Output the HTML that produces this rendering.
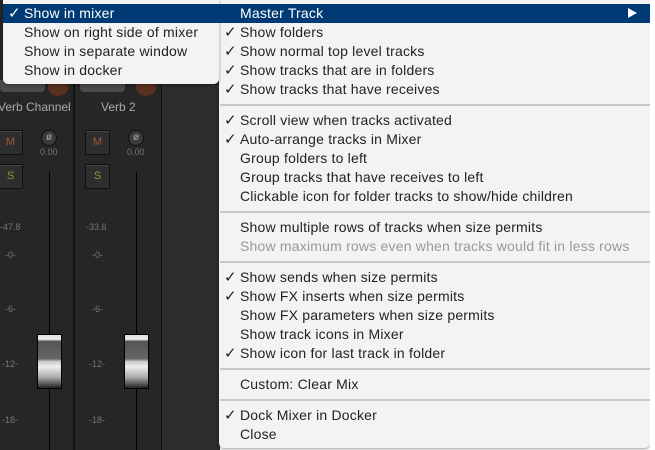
<!DOCTYPE html>
<html><head><style>
*{margin:0;padding:0;box-sizing:border-box}
body{width:655px;height:450px;overflow:hidden;position:relative;background:#fff;font-family:"Liberation Sans",sans-serif}
.mix{position:absolute;left:0;top:0;width:220px;height:450px;background:#262626}
.ab{position:absolute}
.t{position:absolute;font-size:14px;color:#222;white-space:nowrap;line-height:19px;letter-spacing:0.2px}
.ck{position:absolute;font-size:15px;color:#222;line-height:19px;font-family:"DejaVu Sans",sans-serif}
.sep{position:absolute;left:220px;width:430px;height:2px;background:#c8c8c8}
.lbl{position:absolute;font-size:9px;color:#777;font-family:"Liberation Sans",sans-serif}
.btn{position:absolute;width:25px;height:25px;background:#2e2e2e;border:1px solid #111;box-shadow:0 1px 0 #444 inset;font-size:11px;text-align:center;line-height:23px}
.fad{position:absolute;width:25px;height:55px;border:1px solid #000;background:linear-gradient(#ddd 0,#eee 8%,#555 12%,#666 45%,#ccc 50%,#eee 60%,#aaa 80%,#222 100%)}
</style></head><body>
<div class="mix">
  <div class="ab" style="left:73px;top:0;width:2px;height:450px;background:#111"></div>
  <div class="ab" style="left:161px;top:0;width:1px;height:450px;background:#111"></div>
  <div class="ab" style="left:162px;top:0;width:58px;height:450px;background:#2c2c2c"></div>
  <div class="ab" style="left:49px;top:172px;width:1px;height:278px;background:#000"></div>
  <div class="ab" style="left:136px;top:172px;width:1px;height:278px;background:#000"></div>
  <div class="ab" style="left:0;top:80px;width:45px;height:12px;border-radius:0 0 4px 4px;background:#4a4a4a"></div>
  <div class="ab" style="left:80px;top:80px;width:45px;height:12px;border-radius:0 0 4px 4px;background:#4a4a4a"></div>
  <div class="ab" style="left:48px;top:80px;width:20px;height:16px;border-radius:50%;background:#5a3020"></div>
  <div class="ab" style="left:136px;top:80px;width:20px;height:16px;border-radius:50%;background:#5a3020"></div>
  <div class="ab" style="left:-2px;top:100px;font-size:12px;color:#aaa">Verb Channel</div>
  <div class="ab" style="left:101px;top:100px;font-size:12px;color:#aaa">Verb 2</div>
  <div class="btn" style="left:-2px;top:130px;color:#a0553a">M</div>
  <div class="btn" style="left:85px;top:130px;color:#a0553a">M</div>
  <div class="btn" style="left:-2px;top:164px;color:#8a9a30">S</div>
  <div class="btn" style="left:85px;top:164px;color:#8a9a30">S</div>
  <div class="ab" style="left:41px;top:130px;width:16px;height:16px;border-radius:50%;background:#3a3a3a;border:1px solid #111;color:#aaa;font-size:10px;text-align:center;line-height:14px">ø</div>
  <div class="ab" style="left:128px;top:130px;width:16px;height:16px;border-radius:50%;background:#3a3a3a;border:1px solid #111;color:#aaa;font-size:10px;text-align:center;line-height:14px">ø</div>
  <div class="lbl" style="left:40px;top:147px">0.00</div>
  <div class="lbl" style="left:127px;top:147px">0.00</div>
  <div class="lbl" style="left:0;top:222px">-47.8</div><div class="lbl" style="left:86px;top:222px">-33.6</div>
  <div class="lbl" style="left:5px;top:250px">-0-</div><div class="lbl" style="left:92px;top:250px">-0-</div>
  <div class="lbl" style="left:5px;top:304px">-6-</div><div class="lbl" style="left:92px;top:304px">-6-</div>
  <div class="lbl" style="left:2px;top:359px">-12-</div><div class="lbl" style="left:89px;top:359px">-12-</div>
  <div class="lbl" style="left:2px;top:415px">-18-</div><div class="lbl" style="left:89px;top:415px">-18-</div>
  <div class="fad" style="left:37px;top:334px"></div>
  <div class="fad" style="left:124px;top:334px"></div>
</div>
<div class="ab" style="left:219px;top:0;width:431px;height:448px;background:#f3f3f3;border-radius:0 0 5px 5px;box-shadow:0 1px 3px rgba(0,0,0,.4)"></div>
<div class="ab" style="left:650px;top:0;width:5px;height:450px;background:#fff"></div>
<div class="ab" style="left:3px;top:0;width:216px;height:84px;background:#f3f3f3;border-radius:0 0 5px 5px;box-shadow:0 1px 3px rgba(0,0,0,.4)"></div>
<div class="ab" style="left:3px;top:4px;width:647px;height:19px;background:#003a75"></div>
<div class="t" style="left:24px;top:4px;color:#fff">Show in mixer</div>
<div class="ck" style="left:8px;top:4px;color:#fff">✓</div>
<div class="t" style="left:24px;top:23px">Show on right side of mixer</div>
<div class="t" style="left:24px;top:42px">Show in separate window</div>
<div class="t" style="left:24px;top:61px">Show in docker</div>
<div class="t" style="left:240px;top:4px;color:#fff">Master Track</div>
<div class="ab" style="left:628px;top:8px;width:0;height:0;border-left:9px solid #fff;border-top:5px solid transparent;border-bottom:5px solid transparent"></div>

<div class="ck" style="left:224px;top:23px">✓</div><div class="t" style="left:240px;top:23px">Show folders</div>
<div class="ck" style="left:224px;top:42px">✓</div><div class="t" style="left:240px;top:42px">Show normal top level tracks</div>
<div class="ck" style="left:224px;top:61px">✓</div><div class="t" style="left:240px;top:61px">Show tracks that are in folders</div>
<div class="ck" style="left:224px;top:80px">✓</div><div class="t" style="left:240px;top:80px">Show tracks that have receives</div>
<div class="sep" style="top:104px"></div>
<div class="ck" style="left:224px;top:111px">✓</div><div class="t" style="left:240px;top:111px">Scroll view when tracks activated</div>
<div class="ck" style="left:224px;top:130px">✓</div><div class="t" style="left:240px;top:130px">Auto-arrange tracks in Mixer</div>
<div class="t" style="left:240px;top:149px">Group folders to left</div>
<div class="t" style="left:240px;top:168px">Group tracks that have receives to left</div>
<div class="t" style="left:240px;top:187px">Clickable icon for folder tracks to show/hide children</div>
<div class="sep" style="top:211px"></div>
<div class="t" style="left:240px;top:218px">Show multiple rows of tracks when size permits</div>
<div class="t" style="left:240px;top:237px;color:#999">Show maximum rows even when tracks would fit in less rows</div>
<div class="sep" style="top:261px"></div>
<div class="ck" style="left:224px;top:268px">✓</div><div class="t" style="left:240px;top:268px">Show sends when size permits</div>
<div class="ck" style="left:224px;top:287px">✓</div><div class="t" style="left:240px;top:287px">Show FX inserts when size permits</div>
<div class="t" style="left:240px;top:306px">Show FX parameters when size permits</div>
<div class="t" style="left:240px;top:325px">Show track icons in Mixer</div>
<div class="ck" style="left:224px;top:344px">✓</div><div class="t" style="left:240px;top:344px">Show icon for last track in folder</div>
<div class="sep" style="top:368px"></div>
<div class="t" style="left:240px;top:375px">Custom: Clear Mix</div>
<div class="sep" style="top:399px"></div>
<div class="ck" style="left:224px;top:406px">✓</div><div class="t" style="left:240px;top:406px">Dock Mixer in Docker</div>
<div class="t" style="left:240px;top:425px">Close</div>
</body></html>
